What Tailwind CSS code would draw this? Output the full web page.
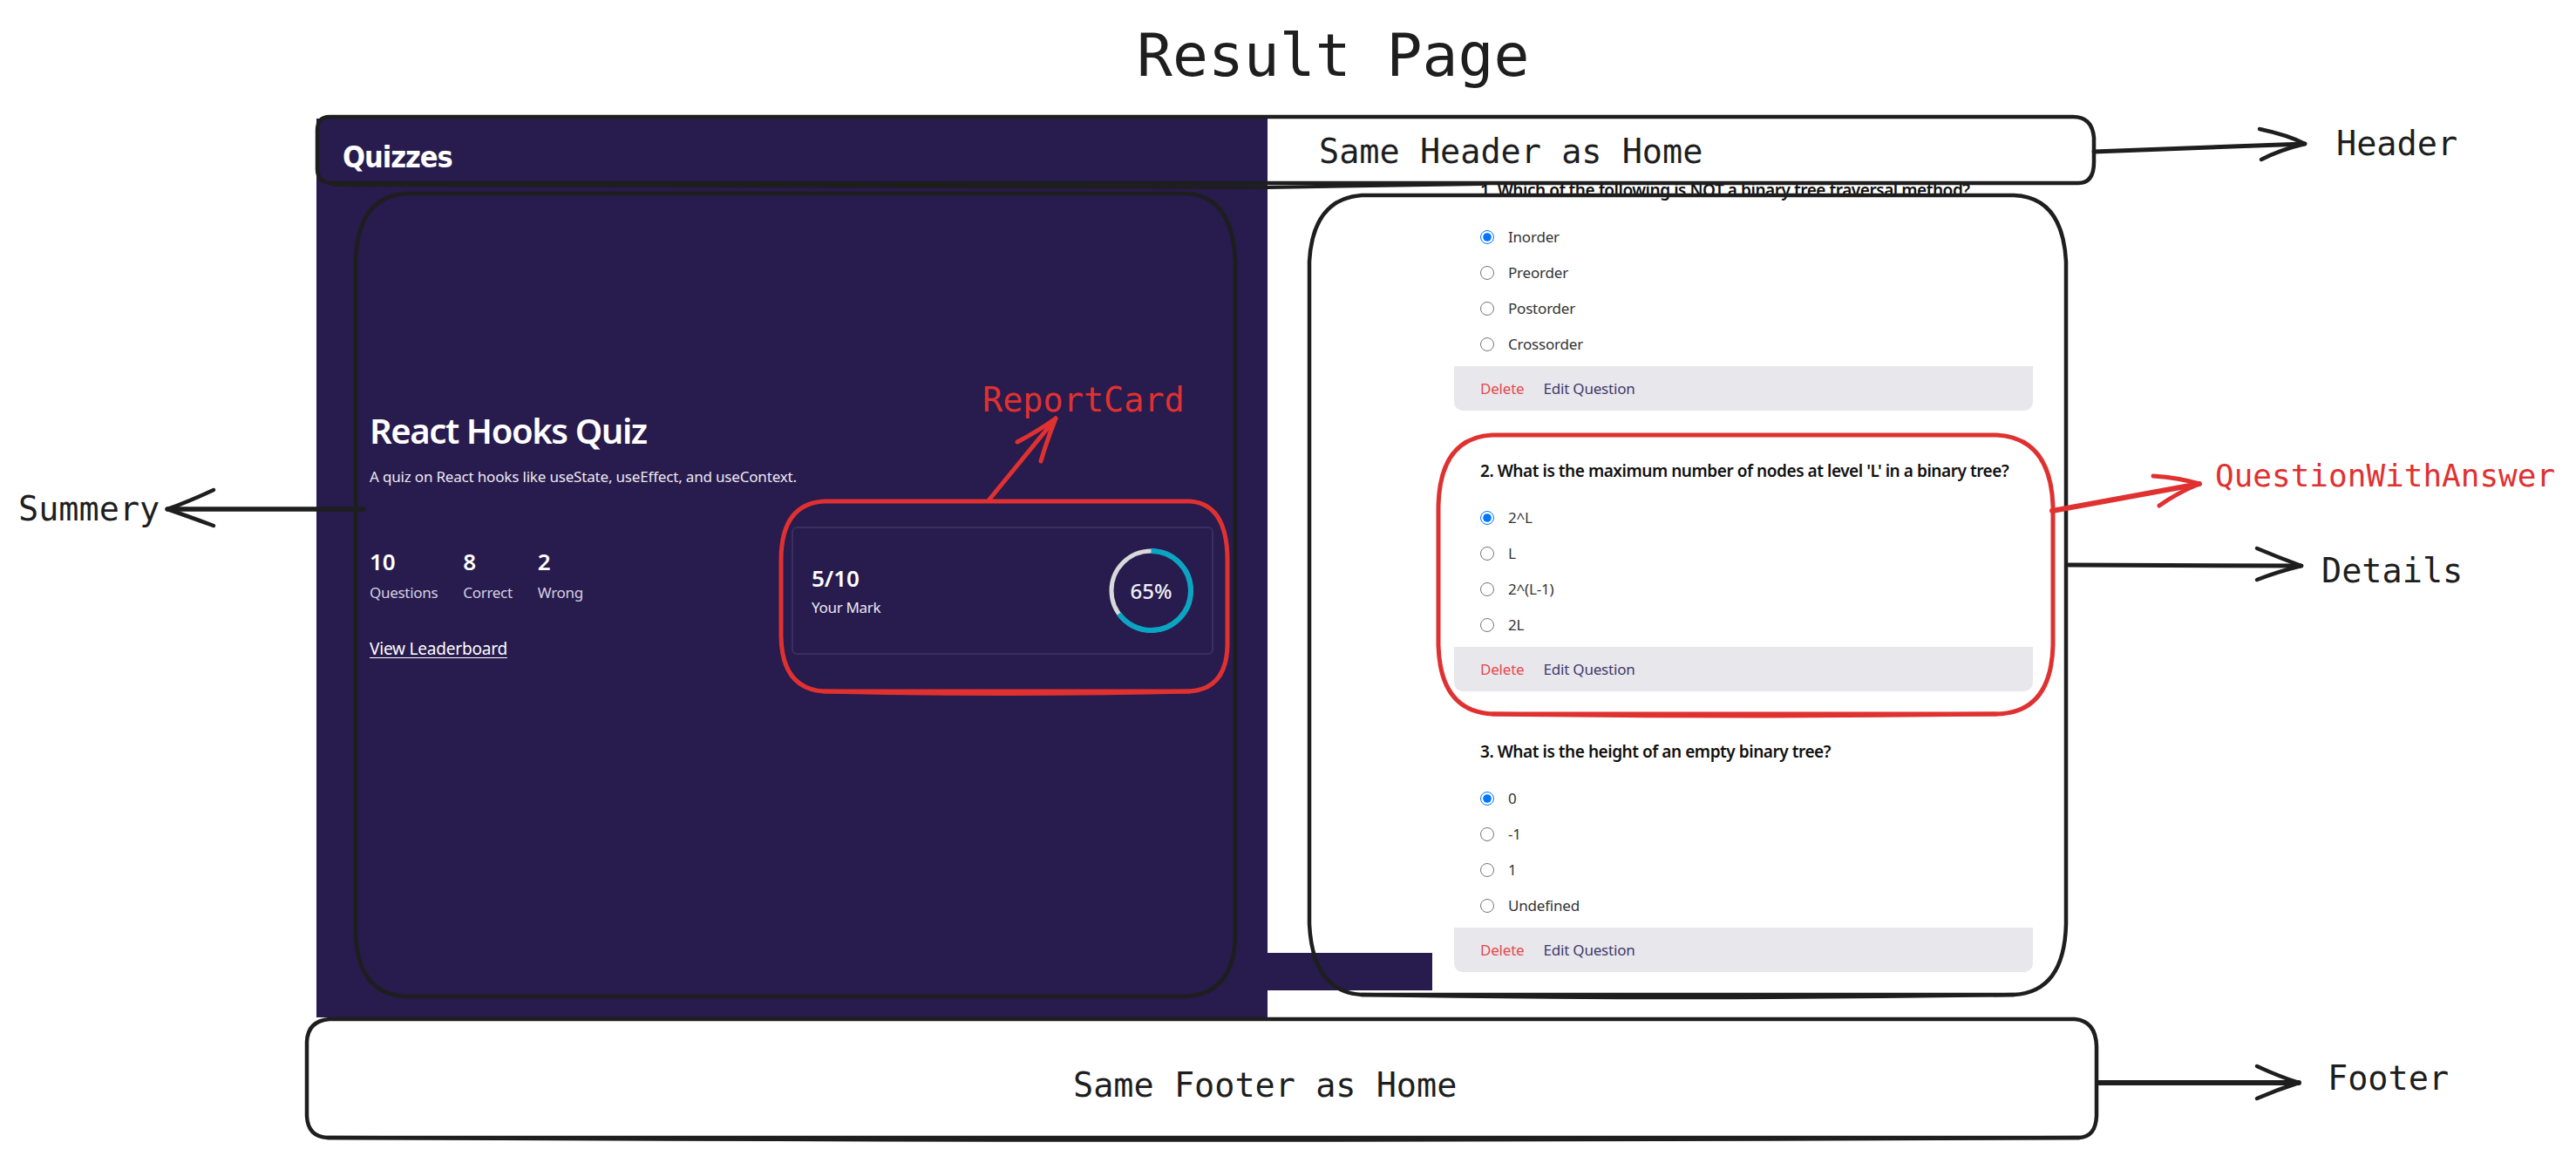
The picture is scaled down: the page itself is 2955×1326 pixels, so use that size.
<!DOCTYPE html>
<html lang="en">
<head>
  <meta charset="UTF-8" />
  <meta name="viewport" content="width=device-width, initial-scale=1.0" />
  <title>Result Page</title>
  <script src="https://cdn.jsdelivr.net/npm/@tailwindcss/browser@4"></script>
</head>
<body class="bg-white font-['Noto_Sans',sans-serif]">
  <div class="relative w-[2955px] h-[1326px] overflow-hidden">

    <!-- Screenshot: summary panel -->
    <section class="absolute left-[363px] top-[136px] w-[1091px] h-[1031px] bg-[#281b4d] text-white flex flex-col">
      <header class="h-[74px] pl-[30px] pt-[24px]">
        <h1 class="font-['DejaVu_Sans',sans-serif] font-stretch-condensed font-bold text-[34px] leading-[40px] tracking-[-1px]">Quizzes</h1>
      </header>
      <div class="flex justify-between items-start pl-[61px] pr-[62px] pt-[260px]">
        <div class="flex flex-col w-[470px] shrink-0">
          <h2 class="text-[40px] leading-[48px] font-semibold tracking-[-1.4px]">React Hooks Quiz</h2>
          <p class="mt-[17px] whitespace-nowrap text-[17px] leading-[24px] text-[#ece9f3] tracking-[-0.18px]">A quiz on React hooks like useState, useEffect, and useContext.</p>
          <div class="mt-[69px] flex gap-[29px]">
            <div>
              <p class="text-[26px] leading-[32px] font-semibold">10</p>
              <p class="mt-[8px] text-[17px] leading-[24px] text-[#d5d1e0] tracking-[-0.3px]">Questions</p>
            </div>
            <div>
              <p class="text-[26px] leading-[32px] font-semibold">8</p>
              <p class="mt-[8px] text-[17px] leading-[24px] text-[#d5d1e0] tracking-[-0.3px]">Correct</p>
            </div>
            <div>
              <p class="text-[26px] leading-[32px] font-semibold">2</p>
              <p class="mt-[8px] text-[17px] leading-[24px] text-[#d5d1e0] tracking-[-0.3px]">Wrong</p>
            </div>
          </div>
          <a href="#" class="mt-[40px] text-[19px] leading-[24px] underline underline-offset-3 tracking-[-0.2px]">View Leaderboard</a>
        </div>
        <div class="mt-[134px] w-[484px] h-[147px] shrink-0 px-[21px] rounded-md border-2 border-[#3b2f5e] flex items-center justify-between">
          <div>
            <p class="text-[26px] leading-[32px] font-semibold">5/10</p>
            <p class="mt-[6px] text-[17px] leading-[24px] text-[#ece9f3] tracking-[-0.3px]">Your Mark</p>
          </div>
          <div class="relative w-[97px] h-[97px] flex items-center justify-center">
            <svg class="absolute inset-0 -rotate-90" width="97" height="97" viewBox="0 0 97 97" fill="none">
              <circle cx="48.5" cy="48.5" r="45.5" stroke="#d9d9d9" stroke-width="5" />
              <circle cx="48.5" cy="48.5" r="45.5" stroke="#0ba5c4" stroke-width="6" stroke-dasharray="185.8 285.9" />
            </svg>
            <span class="text-[24px] leading-[30px] font-medium text-[#f1eff6]">65%</span>
          </div>
        </div>
      </div>
    </section>
    <div class="absolute left-[1454px] top-[1093px] w-[189px] h-[43px] bg-[#281b4d]"></div>

    <!-- Screenshot: questions, scrolled under the header -->
    <section class="absolute left-[1668px] top-[212px] w-[664px] h-[906px] overflow-hidden">
      <div class="-mt-[39px] flex flex-col gap-6">
        <article class="pt-[30px] shadow-[0_0_3px_rgba(0,0,0,0.03)] rounded-b-[10px]">
          <h3 class="px-[30px] whitespace-nowrap text-[19px] leading-[30px] font-semibold text-[#111] tracking-[-0.45px]">1. Which of the following is NOT a binary tree traversal method?</h3>
          <ul class="mt-[18px] px-[30px] text-[17px] text-[#333] tracking-[-0.2px]">
            <li class="h-[41px] flex items-center gap-[16px]"><input type="radio" name="q1" checked class="w-4 h-4 m-0 accent-[#0075ff]" />Inorder</li>
            <li class="h-[41px] flex items-center gap-[16px]"><input type="radio" name="q1" class="w-4 h-4 m-0" />Preorder</li>
            <li class="h-[41px] flex items-center gap-[16px]"><input type="radio" name="q1" class="w-4 h-4 m-0" />Postorder</li>
            <li class="h-[41px] flex items-center gap-[16px]"><input type="radio" name="q1" class="w-4 h-4 m-0" />Crossorder</li>
          </ul>
          <div class="mt-[5px] h-[51px] px-[30px] flex items-center gap-[22px] bg-[#e8e7ec] rounded-b-[10px] text-[17px] tracking-[-0.2px]">
            <button class="text-[#e5484d]">Delete</button>
            <button class="text-[#3f3a6b]">Edit Question</button>
          </div>
        </article>
        <article class="pt-[30px] shadow-[0_0_3px_rgba(0,0,0,0.03)] rounded-b-[10px]">
          <h3 class="px-[30px] whitespace-nowrap text-[19px] leading-[30px] font-semibold text-[#111] tracking-[-0.45px]">2. What is the maximum number of nodes at level 'L' in a binary tree?</h3>
          <ul class="mt-[18px] px-[30px] text-[17px] text-[#333] tracking-[-0.2px]">
            <li class="h-[41px] flex items-center gap-[16px]"><input type="radio" name="q2" checked class="w-4 h-4 m-0 accent-[#0075ff]" />2^L</li>
            <li class="h-[41px] flex items-center gap-[16px]"><input type="radio" name="q2" class="w-4 h-4 m-0" />L</li>
            <li class="h-[41px] flex items-center gap-[16px]"><input type="radio" name="q2" class="w-4 h-4 m-0" />2^(L-1)</li>
            <li class="h-[41px] flex items-center gap-[16px]"><input type="radio" name="q2" class="w-4 h-4 m-0" />2L</li>
          </ul>
          <div class="mt-[5px] h-[51px] px-[30px] flex items-center gap-[22px] bg-[#e8e7ec] rounded-b-[10px] text-[17px] tracking-[-0.2px]">
            <button class="text-[#e5484d]">Delete</button>
            <button class="text-[#3f3a6b]">Edit Question</button>
          </div>
        </article>
        <article class="pt-[30px] shadow-[0_0_3px_rgba(0,0,0,0.03)] rounded-b-[10px]">
          <h3 class="px-[30px] whitespace-nowrap text-[19px] leading-[30px] font-semibold text-[#111] tracking-[-0.45px]">3. What is the height of an empty binary tree?</h3>
          <ul class="mt-[18px] px-[30px] text-[17px] text-[#333] tracking-[-0.2px]">
            <li class="h-[41px] flex items-center gap-[16px]"><input type="radio" name="q3" checked class="w-4 h-4 m-0 accent-[#0075ff]" />0</li>
            <li class="h-[41px] flex items-center gap-[16px]"><input type="radio" name="q3" class="w-4 h-4 m-0" />-1</li>
            <li class="h-[41px] flex items-center gap-[16px]"><input type="radio" name="q3" class="w-4 h-4 m-0" />1</li>
            <li class="h-[41px] flex items-center gap-[16px]"><input type="radio" name="q3" class="w-4 h-4 m-0" />Undefined</li>
          </ul>
          <div class="mt-[5px] h-[51px] px-[30px] flex items-center gap-[22px] bg-[#e8e7ec] rounded-b-[10px] text-[17px] tracking-[-0.2px]">
            <button class="text-[#e5484d]">Delete</button>
            <button class="text-[#3f3a6b]">Edit Question</button>
          </div>
        </article>
      </div>
    </section>

    <!-- Sketch strokes drawn over the screenshot -->
    <svg class="absolute inset-0" width="2955" height="1326" viewBox="0 0 2955 1326" fill="none" stroke-linecap="round" stroke-linejoin="round">
      <g stroke="#1e1e1e" stroke-width="4.5">
        <!-- header box -->
        <path d="M378 134 H2378 Q2400 134 2402 158 V186 Q2402 210 2384 210 H382 Q364 210 364 194 V150 Q364 134 378 134" />
        <path d="M382 212 L1454 215 L1700 211" stroke-width="4" />
        <path d="M2402 174 L2644 165" stroke-width="5" />
        <path d="M2592 148 Q2625 155 2644 165 Q2615 172 2594 183" />
        <!-- summary box -->
        <path d="M465 222 H1360 Q1414 224 1417 300 V1070 Q1417 1140 1360 1143 H465 Q410 1140 408 1070 V300 Q410 226 465 222" />
        <path d="M417 584 H192" stroke-width="5.5" />
        <path d="M245 562 Q215 576 192 584 Q215 592 245 603" />
        <!-- details box -->
        <path d="M1562 224 H2310 Q2366 226 2370 300 V1060 Q2368 1138 2310 1141 H1562 Q1506 1138 1502 1060 V300 Q1506 228 1562 224" />
        <path d="M1562 1141 Q1940 1147 2310 1141" />
        <path d="M2373 648 L2640 649" stroke-width="5" />
        <path d="M2589 629 Q2615 640 2640 649 Q2612 656 2589 665" />
        <!-- footer box -->
        <path d="M378 1169 H2380 Q2404 1171 2405 1200 V1280 Q2404 1304 2385 1305 H376 Q353 1304 352 1280 V1195 Q353 1171 378 1169" />
        <path d="M376 1305 Q1380 1310 2385 1305" />
        <path d="M2408 1242 L2637 1242" stroke-width="6" />
        <path d="M2589 1223 Q2615 1235 2637 1242 Q2612 1250 2589 1260" />
      </g>
      <g stroke="#e03131" stroke-width="5">
        <!-- report card box -->
        <path d="M945 575 H1365 Q1407 578 1408 640 V740 Q1407 790 1365 793 H945 Q897 790 896 730 V640 Q897 578 945 575" />
        <path d="M945 793 Q1150 798 1365 793" />
        <path d="M1134 574 L1211 480" />
        <path d="M1167 507 Q1190 495 1211 480 Q1201 505 1194 529" />
        <!-- question box -->
        <path d="M1712 499 H2290 Q2352 502 2355 580 V740 Q2353 818 2290 819 H1712 Q1652 816 1650 740 V580 Q1652 502 1712 499" />
        <path d="M1712 819 Q2000 823 2290 819" />
        <path d="M2354 586 L2523 555" stroke-width="6" />
        <path d="M2470 546 Q2500 548 2523 555 Q2498 565 2477 580" />
      </g>
    </svg>

    <!-- Sketch labels -->
    <div class="font-['DejaVu_Sans_Mono',monospace] text-[#1e1e1e] text-[38.5px] leading-[40px] whitespace-nowrap">
      <h1 class="absolute left-[1304px] top-[24px] text-[68px] leading-[80px]">Result Page</h1>
      <p class="absolute left-[1513px] top-[154px]">Same Header as Home</p>
      <p class="absolute left-[2680px] top-[145px]">Header</p>
      <p class="absolute left-[21px] top-[564px]">Summery</p>
      <p class="absolute left-[1127px] top-[439px] text-[#e03131]">ReportCard</p>
      <p class="absolute left-[2541px] top-[526px] text-[36px] text-[#e03131]">QuestionWithAnswer</p>
      <p class="absolute left-[2663px] top-[635px]">Details</p>
      <p class="absolute left-[1231px] top-[1225px]">Same Footer as Home</p>
      <p class="absolute left-[2670px] top-[1217px]">Footer</p>
    </div>
  </div>
</body>
</html>
